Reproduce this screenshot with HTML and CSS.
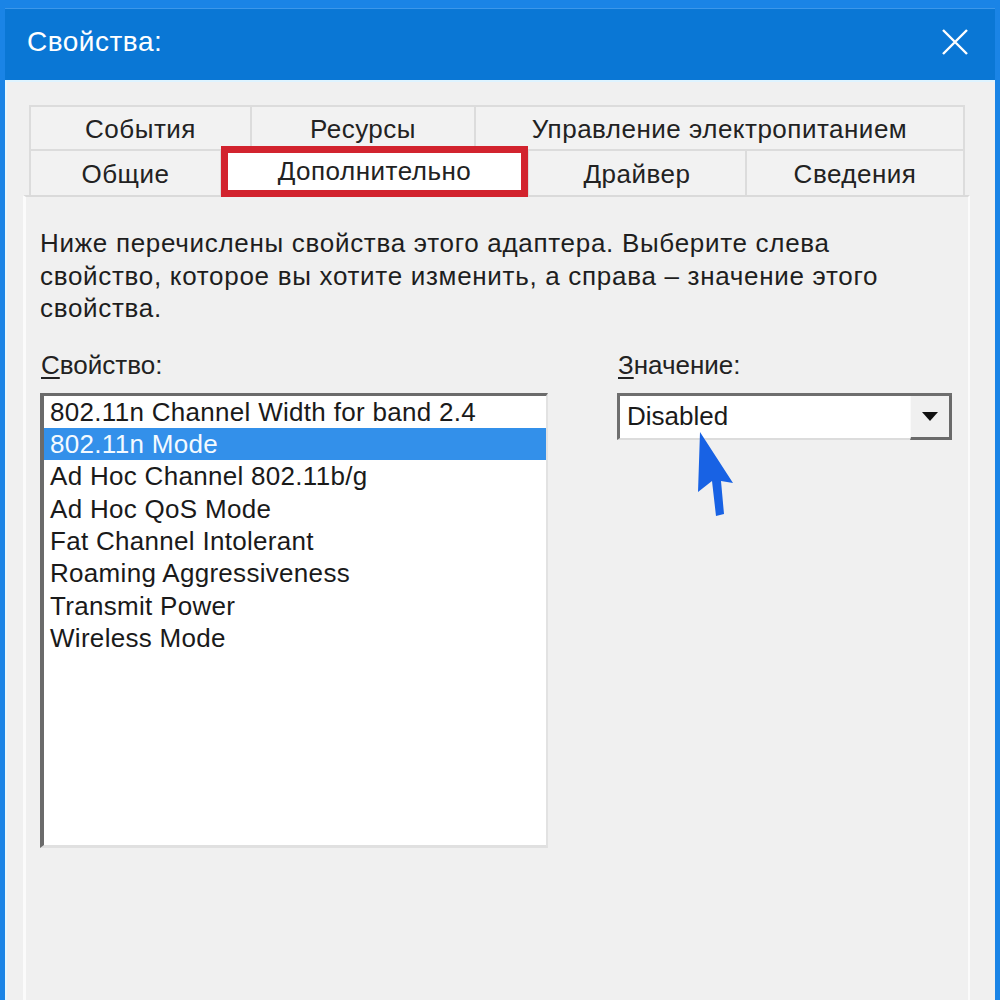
FILE: index.html
```html
<!DOCTYPE html>
<html lang="ru">
<head>
<meta charset="utf-8">
<title>Свойства</title>
<link rel="stylesheet" href="styles.css">
</head>
<body>
<div class="window">
  <div class="titlebar">
    <span class="title">Свойства:</span>
    <svg class="close" width="28" height="28" viewBox="0 0 28 28"><path d="M2 2 L26 26 M26 2 L2 26" stroke="#fff" stroke-width="2.4" fill="none"/></svg>
  </div>
  <div class="client">
    <div class="tabs">
      <div class="tabrow row1">
        <div class="tab t-events">События</div>
        <div class="tab t-res">Ресурсы</div>
        <div class="tab t-power">Управление электропитанием</div>
      </div>
      <div class="tabrow row2">
        <div class="tab t-general">Общие</div>
        <div class="tab t-adv selected">Дополнительно</div>
        <div class="tab t-driver">Драйвер</div>
        <div class="tab t-info">Сведения</div>
      </div>
    </div>
    <div class="panel">
      <p class="desc">Ниже перечислены свойства этого адаптера. Выберите слева<br>свойство, которое вы хотите изменить, а справа – значение этого<br>свойства.</p>
      <div class="fields">
        <div class="col-left">
          <div class="label"><u>С</u>войство:</div>
          <div class="listbox">
            <div class="item">802.11n Channel Width for band 2.4</div>
            <div class="item active">802.11n Mode</div>
            <div class="item">Ad Hoc Channel 802.11b/g</div>
            <div class="item">Ad Hoc QoS Mode</div>
            <div class="item">Fat Channel Intolerant</div>
            <div class="item">Roaming Aggressiveness</div>
            <div class="item">Transmit Power</div>
            <div class="item">Wireless Mode</div>
          </div>
        </div>
        <div class="col-right">
          <div class="label"><u>З</u>начение:</div>
          <div class="combo">
            <span class="combo-value">Disabled</span>
            <div class="combo-btn"><span class="tri"></span></div>
          </div>
        </div>
      </div>
    </div>
  </div>
  <svg class="cursor" width="40" height="90" viewBox="0 0 40 90"><polygon points="5,2 3,62 17,51 21,86 29,84 26,51 38,53" fill="#1862e4"/></svg>
</div>
</body>
</html>
```
FILE: styles.css
```css
html, body {
  margin: 0;
  padding: 0;
  background: #1a84e6;
}
body {
  font-family: "Liberation Sans", Arial, sans-serif;
  color: #1e1e1e;
}
.window {
  position: relative;
  width: 1000px;
  height: 1000px;
  box-sizing: border-box;
  background: #1a84e6;
  padding: 0 5px;
  display: flex;
  flex-direction: column;
  overflow: hidden;
}
.titlebar {
  height: 72px;
  margin-top: 8px;
  background: #0a77d5;
  border-top: 1px solid #3c97ea;
  display: flex;
  align-items: center;
  justify-content: space-between;
  padding: 0 24px 6px 22px;
  box-sizing: border-box;
}
.title {
  color: #fff;
  font-size: 28px;
  letter-spacing: 0.5px;
}
.close {
  margin-right: 2px;
}
.client {
  flex: 1;
  background: #f0f0f0;
  border-top: 2px solid #dff4ff;
  border-left: 2px solid #e6f7ff;
  padding: 23px 25px 0 16px;
  display: flex;
  flex-direction: column;
}
.tabs {
  margin: 0 5px 0 6px;
  display: flex;
  flex-direction: column;
}
.tabrow {
  display: flex;
}
.row1 { height: 44px; }
.row2 { height: 46px; }
.tab {
  box-sizing: border-box;
  border-top: 2px solid #dcdcdc;
  border-left: 2px solid #dcdcdc;
  background: #f2f2f2;
  font-size: 26px;
  letter-spacing: 0.5px;
  color: #222;
  display: flex;
  align-items: center;
  justify-content: center;
  padding-top: 2px;
}
.tab:last-child { border-right: 2px solid #dcdcdc; }
.t-events { width: 221px; }
.t-res { width: 224px; }
.t-power { width: 491px; }
.t-general { width: 191px; }
.t-adv { width: 307px; }
.t-driver { width: 218px; }
.t-info { width: 220px; }
.selected {
  position: relative;
  background: #fff;
  z-index: 2;
  padding-top: 0;
  padding-bottom: 4px;
}
.selected::after {
  content: "";
  position: absolute;
  left: -1px;
  right: -1px;
  top: -5px;
  bottom: -2px;
  border: 7px solid #d2232e;
}
.panel {
  flex: 1;
  background: #f0f0f0;
  border-top: 2px solid #dadada;
  border-left: 3px solid #fbfbfb;
  border-right: 2px solid #fbfbfb;
  padding: 30px 0 0 14px;
}
.desc {
  margin: 0;
  font-size: 26px;
  letter-spacing: 0.7px;
  line-height: 32.5px;
  color: #1e1e1e;
  white-space: nowrap;
}
.fields {
  margin-top: 24px;
  display: flex;
  gap: 69px;
}
.label {
  font-size: 26px;
  line-height: 32px;
  color: #222;
  margin-left: 1px;
}
.label u {
  text-decoration-thickness: 2px;
  text-underline-offset: 3px;
}
.col-left { width: 508px; }
.col-right { width: 335px; }
.listbox {
  margin-top: 12px;
  height: 455px;
  box-sizing: border-box;
  background: #fff;
  border-top: 3px solid #6b6b6b;
  border-left: 4px solid #6b6b6b;
  border-right: 2px solid #e2e2e2;
  border-bottom: 3px solid #e0e0e0;
  padding-top: 0;
}
.item {
  font-size: 26px;
  letter-spacing: 0.3px;
  line-height: 32.4px;
  height: 32.4px;
  padding-left: 6px;
  color: #1a1a1a;
  white-space: nowrap;
}
.item.active {
  background: #3390ea;
  color: #f4faff;
}
.combo {
  margin-top: 12px;
  height: 47px;
  box-sizing: border-box;
  background: #fff;
  border-top: 3px solid #6e6e6e;
  border-left: 3px solid #6e6e6e;
  border-bottom: 2px solid #dcdcdc;
  display: flex;
  align-items: stretch;
}
.combo-value {
  flex: 1;
  font-size: 26px;
  line-height: 40px;
  padding-left: 7px;
  color: #1a1a1a;
}
.combo-btn {
  width: 38px;
  background: #f0f0f0;
  border-right: 3px solid #6a6a6a;
  border-bottom: 3px solid #6a6a6a;
  border-left: 1px solid #fafafa;
  margin-bottom: -2px;
  display: flex;
  align-items: center;
  justify-content: center;
}
.tri {
  width: 0;
  height: 0;
  border-left: 8px solid transparent;
  border-right: 8px solid transparent;
  border-top: 9px solid #111;
}
.cursor {
  position: absolute;
  left: 695px;
  top: 430px;
  z-index: 5;
}
```
